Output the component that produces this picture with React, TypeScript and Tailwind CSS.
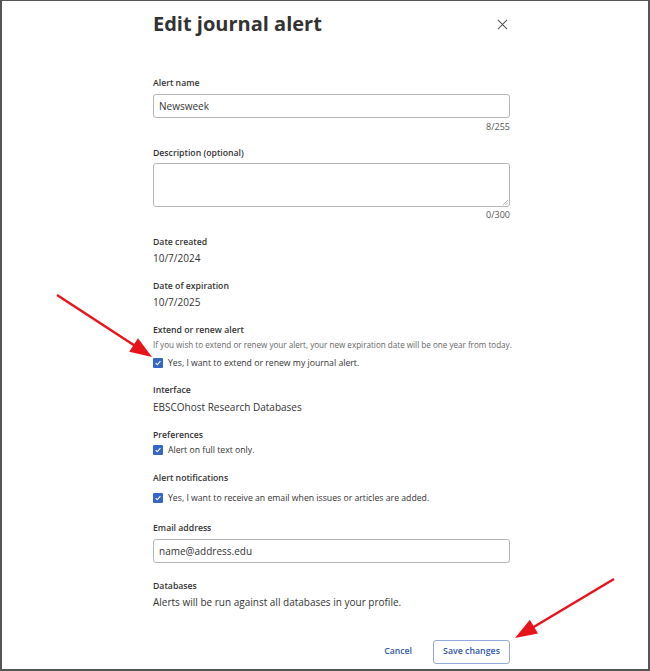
import React from "react"

const font = { fontFamily: '"Open Sans", "Noto Sans", sans-serif' }

const Label = ({ children, className = "" }: { children: React.ReactNode; className?: string }) => (
  <div className={`text-[8.7px] leading-[14px] font-semibold text-[#333] ${className}`}>{children}</div>
)

const Value = ({ children, className = "" }: { children: React.ReactNode; className?: string }) => (
  <div className={`text-[10px] leading-[16px] text-[#333] ${className}`}>{children}</div>
)

const Counter = ({ children, className = "" }: { children: React.ReactNode; className?: string }) => (
  <div className={`text-right text-[9px] leading-[12px] text-[#555] ${className}`}>{children}</div>
)

const Check = ({ label, className = "" }: { label: string; className?: string }) => (
  <label className={`flex h-4 items-center gap-[5px] text-[8.7px] leading-[16px] text-[#333] ${className}`}>
    <span className="flex h-[10px] w-[10px] items-center justify-center rounded-[1px] bg-[#3465c9]">
      <svg viewBox="0 0 10 10" className="h-[8px] w-[8px]">
        <path d="M2 5.2 4.1 7.2 8 2.8" fill="none" stroke="white" strokeWidth="1.4" />
      </svg>
    </span>
    <span>{label}</span>
  </label>
)

const Arrows = () => (
  <svg className="pointer-events-none absolute inset-0" width="650" height="671">
    <line x1="55" y1="294" x2="134" y2="345.5" stroke="#e8141b" strokeWidth="2.5" />
    <polygon points="150,356 127.2,350.7 136,337.3" fill="#e8141b" />
    <line x1="612" y1="578" x2="530" y2="627" stroke="#e8141b" strokeWidth="2.5" />
    <polygon points="513,637 527.8,618.8 536,632.6" fill="#e8141b" />
  </svg>
)

export default function App() {
  return (
    <div
      className="relative h-[671px] w-[650px] overflow-hidden border-x-2 border-t border-b-2 border-[#555] bg-white"
      style={font}
    >
      <div className="ml-[151px] w-[357px]">
        <div className="flex items-center justify-between pt-[8px]">
          <h1 className="text-[20px] leading-[30px] font-bold text-[#333]">Edit journal alert</h1>
          <svg viewBox="0 0 12 12" className="mr-[2px] h-[11px] w-[11px]">
            <path d="M1 1 11 11M11 1 1 11" stroke="#555" strokeWidth="1.1" />
          </svg>
        </div>

        <Label className="mt-[37px]">Alert name</Label>
        <div className="mt-[4px] flex h-[24px] items-center rounded-[3px] border border-[#b5b5b5] px-[5px] text-[10px] text-[#333]">
          Newsweek
        </div>
        <Counter className="mt-[3px]">8/255</Counter>

        <Label className="mt-[13px]">Description (optional)</Label>
        <div className="relative mt-[3px] h-[44px] rounded-[3px] border border-[#b5b5b5]">
          <svg viewBox="0 0 6 6" className="absolute right-[1px] bottom-[1px] h-[6px] w-[6px]">
            <path d="M6 1 1 6M6 3.5 3.5 6" stroke="#999" strokeWidth="0.7" />
          </svg>
        </div>
        <Counter className="mt-[2px]">0/300</Counter>

        <Label className="mt-[14px]">Date created</Label>
        <Value className="mt-[1px]">10/7/2024</Value>

        <Label className="mt-[13px]">Date of expiration</Label>
        <Value className="mt-[1px]">10/7/2025</Value>

        <Label className="mt-[13px]">Extend or renew alert</Label>
        <div className="mt-[2px] text-[8.1px] leading-[12px] whitespace-nowrap text-[#666]">
          If you wish to extend or renew your alert, your new expiration date will be one year from today.
        </div>
        <Check className="mt-[4px]" label="Yes, I want to extend or renew my journal alert." />

        <Label className="mt-[12px]">Interface</Label>
        <Value className="mt-[2px]">EBSCOhost Research Databases</Value>

        <Label className="mt-[13px]">Preferences</Label>
        <Check label="Alert on full text only." />

        <Label className="mt-[13px]">Alert notifications</Label>
        <Check className="mt-[5px]" label="Yes, I want to receive an email when issues or articles are added." />

        <Label className="mt-[15px]">Email address</Label>
        <div className="mt-[4px] flex h-[24px] items-center rounded-[3px] border border-[#b5b5b5] px-[5px] text-[10px] text-[#333]">
          name@address.edu
        </div>

        <Label className="mt-[16px]">Databases</Label>
        <Value className="mt-[1px]">Alerts will be run against all databases in your profile.</Value>

        <div className="mt-[30px] flex items-center justify-end gap-[21px]">
          <span className="text-[8.7px] font-semibold text-[#2f57a8]">Cancel</span>
          <span className="flex h-[24px] w-[77px] items-center justify-center rounded-[3px] border border-[#92a9de] text-[8.8px] font-semibold text-[#2f57a8]">
            Save changes
          </span>
        </div>
      </div>
      <Arrows />
    </div>
  )
}
